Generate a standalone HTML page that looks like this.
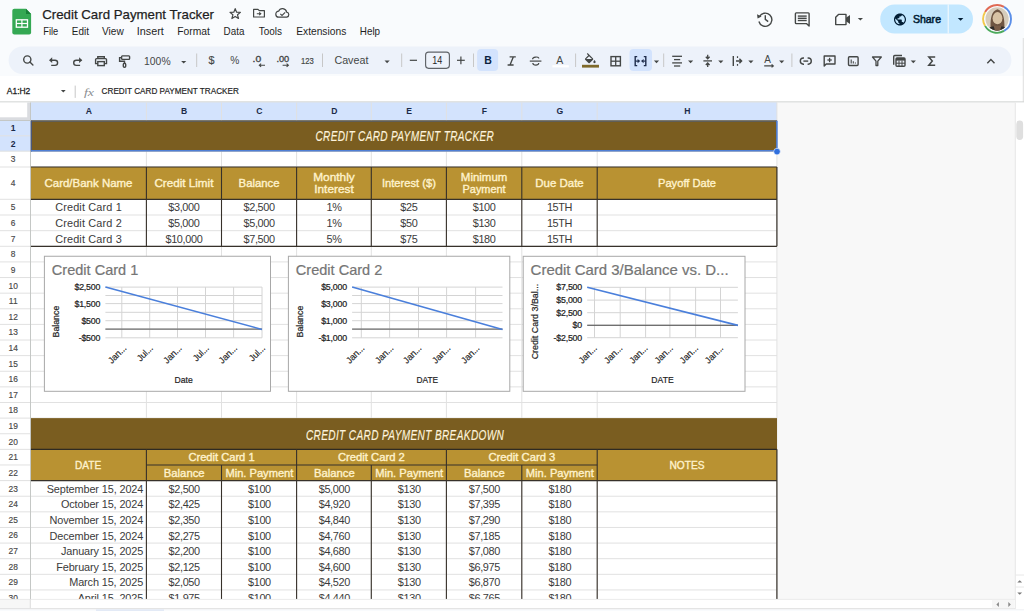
<!DOCTYPE html>
<html><head><meta charset="utf-8"><title>Credit Card Payment Tracker</title>
<style>
html,body{margin:0;padding:0;width:1024px;height:611px;overflow:hidden;background:#f9fbfd}
svg{display:block;font-family:"Liberation Sans", sans-serif}
</style></head><body>
<svg width="1024" height="611" viewBox="0 0 1024 611">
<rect x="0" y="0" width="1024" height="76" fill="#f9fbfd" />
<rect x="0" y="76" width="1024" height="26" fill="#ffffff" />
<path d="M14.3 8.8 H26 L31.1 13.9 V32.6 a2 2 0 0 1 -2 2 H14.3 a2 2 0 0 1 -2 -2 V10.8 a2 2 0 0 1 2 -2 Z" fill="#34a853"/>
<path d="M26 8.8 V13.9 H31.1 Z" fill="#188038"/>
<rect x="16.3" y="19.8" width="11.2" height="7.4" fill="none" stroke="#fff" stroke-width="1.3"/>
<line x1="16.3" y1="23.5" x2="27.5" y2="23.5" stroke="#fff" stroke-width="1.2" />
<line x1="21.9" y1="19.8" x2="21.9" y2="27.2" stroke="#fff" stroke-width="1.2" />
<text x="42.2" y="18.8" font-size="13.6" fill="#1f1f1f" textLength="171.8" lengthAdjust="spacingAndGlyphs" stroke="#1f1f1f" stroke-width="0.25">Credit Card Payment Tracker</text>
<path d="M235.2 8.6 L236.6 12.2 L240.4 12.4 L237.5 14.8 L238.5 18.5 L235.2 16.4 L231.9 18.5 L232.9 14.8 L230 12.4 L233.8 12.2 Z" fill="none" stroke="#444746" stroke-width="1.2" stroke-linejoin="round"/>
<path d="M253.6 9.4 H258 L259.3 10.7 H264.4 V17 H253.6 Z" fill="none" stroke="#444746" stroke-width="1.2" stroke-linejoin="round"/>
<path d="M256.8 13.7 H260.6 M259.2 12.3 L260.8 13.7 L259.2 15.1" fill="none" stroke="#444746" stroke-width="1.1"/>
<path d="M279 17.2 a3 3 0 0 1 -0.4 -6 a4.2 4.2 0 0 1 8 0.9 a2.6 2.6 0 0 1 0.2 5.1 Z" fill="none" stroke="#444746" stroke-width="1.2" stroke-linejoin="round"/>
<path d="M280.3 13.9 L282 15.4 L285.2 12.3" fill="none" stroke="#444746" stroke-width="1.1"/>
<text x="43.3" y="34.5" font-size="11.2" fill="#1f1f1f" textLength="15.0" lengthAdjust="spacingAndGlyphs">File</text>
<text x="71.80000000000001" y="34.5" font-size="11.2" fill="#1f1f1f" textLength="17.1" lengthAdjust="spacingAndGlyphs">Edit</text>
<text x="102.0" y="34.5" font-size="11.2" fill="#1f1f1f" textLength="21.7" lengthAdjust="spacingAndGlyphs">View</text>
<text x="136.8" y="34.5" font-size="11.2" fill="#1f1f1f" textLength="27.0" lengthAdjust="spacingAndGlyphs">Insert</text>
<text x="177.20000000000002" y="34.5" font-size="11.2" fill="#1f1f1f" textLength="32.6" lengthAdjust="spacingAndGlyphs">Format</text>
<text x="223.6" y="34.5" font-size="11.2" fill="#1f1f1f" textLength="20.8" lengthAdjust="spacingAndGlyphs">Data</text>
<text x="258.7" y="34.5" font-size="11.2" fill="#1f1f1f" textLength="23.3" lengthAdjust="spacingAndGlyphs">Tools</text>
<text x="296.2" y="34.5" font-size="11.2" fill="#1f1f1f" textLength="50.1" lengthAdjust="spacingAndGlyphs">Extensions</text>
<text x="359.79999999999995" y="34.5" font-size="11.2" fill="#1f1f1f" textLength="20.3" lengthAdjust="spacingAndGlyphs">Help</text>
<path d="M759.5 16.5 A6.6 6.6 0 1 1 758.9 21.5" fill="none" stroke="#444746" stroke-width="1.4"/>
<path d="M757 14.2 L757.6 18.6 L761.6 16.6 Z" fill="#444746"/>
<path d="M765.3 15.3 V19.4 L768.2 21.6" fill="none" stroke="#444746" stroke-width="1.4"/>
<path d="M796.2 12.9 H808.3 a0.8 0.8 0 0 1 0.8 0.8 V26.1 L806.4 23.6 H796.2 a0.8 0.8 0 0 1 -0.8 -0.8 V13.7 a0.8 0.8 0 0 1 0.8 -0.8 Z" fill="none" stroke="#444746" stroke-width="1.4" stroke-linejoin="round"/>
<line x1="797.8" y1="16.1" x2="806.7" y2="16.1" stroke="#444746" stroke-width="1.4" />
<line x1="797.8" y1="18.3" x2="806.7" y2="18.3" stroke="#444746" stroke-width="1.4" />
<line x1="797.8" y1="20.5" x2="806.7" y2="20.5" stroke="#444746" stroke-width="1.4" />
<path d="M838.5 14.4 H846 V24.6 H835.7 V17.2 Z" fill="none" stroke="#444746" stroke-width="1.4" stroke-linejoin="round"/>
<path d="M846 17.8 L850 15 V24 L846 21.2 Z" fill="#444746"/>
<path d="M857.8 18 H863 L860.4 20.6 Z" fill="#444746"/>
<rect x="880.2" y="4.5" width="92.8" height="28.9" rx="14.45" fill="#c2e7ff"/>
<line x1="948.2" y1="4.5" x2="948.2" y2="33.4" stroke="#f9fbfd" stroke-width="1" />
<path transform="translate(892.8,12.35) scale(0.6)" fill="#001d35" d="M12 2C6.48 2 2 6.48 2 12s4.48 10 10 10 10-4.48 10-10S17.52 2 12 2zm-1 17.93c-3.95-.49-7-3.85-7-7.93 0-.62.08-1.21.21-1.79L9 15v1c0 1.1.9 2 2 2v1.930zm6.9-2.54c-.26-.81-1-1.390-1.900-1.390h-1v-3c0-.55-.45-1-1-1H8v-2h2c.55 0 1-.45 1-1V7h2c1.1 0 2-.9 2-2v-.41c2.93 1.19 5 4.06 5 7.41 0 2.08-.8 3.97-2.1 5.39z"/>
<text x="912.9" y="22.9" font-size="11.2" fill="#001d35" textLength="28.1" lengthAdjust="spacingAndGlyphs" stroke="#001d35" stroke-width="0.55">Share</text>
<path d="M957.8 18 H963.4 L960.6 20.8 Z" fill="#001d35"/>
<path d="M985.06 11.95 A13.9 13.9 0 0 1 1004.05 6.86" fill="none" stroke="#e06a55" stroke-width="1.9"/>
<path d="M1004.05 6.86 A13.9 13.9 0 0 1 1004.05 30.94" fill="none" stroke="#5a8ee8" stroke-width="1.9"/>
<path d="M1004.05 30.94 A13.9 13.9 0 0 1 985.06 25.85" fill="none" stroke="#4caa5c" stroke-width="1.9"/>
<path d="M985.06 25.85 A13.9 13.9 0 0 1 985.06 11.95" fill="none" stroke="#f2c94c" stroke-width="1.9"/>
<clipPath id="avc"><circle cx="997.1" cy="18.9" r="11.6"/></clipPath>
<g clip-path="url(#avc)">
<rect x="980" y="2" width="36" height="34" fill="#d6ccbb"/>
<path d="M990.6 32 C990.4 22 990 11.5 997.5 9.3 C1004.8 11.5 1004.6 22 1004.4 32 Z" fill="#6f5542"/>
<ellipse cx="997.5" cy="18.2" rx="4.9" ry="6.1" fill="#d8c2a4"/>
<path d="M986 33 C987 28.5 990 26.5 993.5 26.2 L1001.5 26.2 C1005 26.5 1008 28.5 1009 33 Z" fill="#2f2c2a"/>
<path d="M993.6 26 C994.6 29 995 31 995 33 L1000 33 C1000 31 1000.4 29 1001.4 26 Z" fill="#7a5d48"/>
</g>
<rect x="8.6" y="46.6" width="1002.8" height="27.4" rx="13.7" fill="#edf2fa"/>
<circle cx="27.3" cy="59.5" r="3.6" fill="none" stroke="#444746" stroke-width="1.4"/>
<path d="M29.9 62.1 L32.9 65" fill="none" stroke="#444746" stroke-width="1.4" stroke-linecap="round"/>
<path d="M50 60.2 H55 A2.6 2.6 0 0 1 55 65.4 H51.2" fill="none" stroke="#444746" stroke-width="1.4"/>
<path d="M52.2 57.3 L49 60.2 L52.2 63.1 Z" fill="#444746"/>
<path d="M81.3 60.2 H76.3 A2.6 2.6 0 0 0 76.3 65.4 H80.1" fill="none" stroke="#444746" stroke-width="1.4"/>
<path d="M79.1 57.3 L82.3 60.2 L79.1 63.1 Z" fill="#444746"/>
<path d="M97.8 58.6 V56.7 H104.3 V58.6" fill="none" stroke="#444746" stroke-width="1.4"/>
<path d="M97.8 63.6 H95.6 V59.6 a1 1 0 0 1 1 -1 H105.5 a1 1 0 0 1 1 1 V63.6 H104.3" fill="none" stroke="#444746" stroke-width="1.4"/>
<rect x="97.8" y="61.6" width="6.5" height="4" fill="none" stroke="#444746" stroke-width="1.4"/>
<rect x="121.6" y="55.9" width="8" height="3.5" rx="0.8" fill="none" stroke="#444746" stroke-width="1.4"/>
<path d="M121.6 57.6 H119.6 V61.3 H124.5 V63.3" fill="none" stroke="#444746" stroke-width="1.4"/>
<rect x="123.3" y="63.3" width="2.4" height="4" rx="1.1" fill="none" stroke="#444746" stroke-width="1.4"/>
<text x="144.1" y="64.8" font-size="11" fill="#444746" textLength="26.5" lengthAdjust="spacingAndGlyphs">100%</text>
<path d="M181.1 61 H186.3 L183.7 63.6 Z" fill="#444746"/>
<line x1="196.7" y1="53.5" x2="196.7" y2="67" stroke="#c7c7c7" stroke-width="1" />
<text x="211.5" y="64.4" font-size="10.8" fill="#444746" text-anchor="middle" stroke="#444746" stroke-width="0.15">$</text>
<text x="234.9" y="64.3" font-size="10.2" fill="#444746" text-anchor="middle">%</text>
<text x="252.6" y="62.4" font-size="9.2" fill="#444746" textLength="8.6" lengthAdjust="spacingAndGlyphs" stroke="#444746" stroke-width="0.35">.0</text>
<path d="M265 65.2 H259.3 M261.1 63.6 L259.3 65.2 L261.1 66.8" fill="none" stroke="#444746" stroke-width="1.1"/>
<text x="276.4" y="62.4" font-size="9.2" fill="#444746" textLength="12.8" lengthAdjust="spacingAndGlyphs" stroke="#444746" stroke-width="0.35">.00</text>
<path d="M282.6 65.2 H288.4 M286.6 63.6 L288.4 65.2 L286.6 66.8" fill="none" stroke="#444746" stroke-width="1.1"/>
<text x="301.1" y="64.3" font-size="9.6" fill="#444746" textLength="12.8" lengthAdjust="spacingAndGlyphs" stroke="#444746" stroke-width="0.2">123</text>
<line x1="322.5" y1="53.5" x2="322.5" y2="67" stroke="#c7c7c7" stroke-width="1" />
<text x="334.4" y="63.8" font-size="11.2" fill="#444746" textLength="34" lengthAdjust="spacingAndGlyphs">Caveat</text>
<path d="M384.5 60.6 H389.7 L387.1 63.2 Z" fill="#444746"/>
<line x1="401.7" y1="53.5" x2="401.7" y2="67" stroke="#c7c7c7" stroke-width="1" />
<line x1="409.8" y1="60.3" x2="417" y2="60.3" stroke="#444746" stroke-width="1.2" />
<rect x="425.6" y="52.1" width="23.8" height="16.2" rx="3" fill="none" stroke="#5f6368" stroke-width="1.15"/>
<text x="437.3" y="64.2" font-size="10.5" fill="#1f1f1f" text-anchor="middle" textLength="10" lengthAdjust="spacingAndGlyphs">14</text>
<line x1="457" y1="60.3" x2="464.8" y2="60.3" stroke="#444746" stroke-width="1.2" />
<line x1="460.9" y1="56.4" x2="460.9" y2="64.2" stroke="#444746" stroke-width="1.2" />
<line x1="473.5" y1="53.5" x2="473.5" y2="67" stroke="#c7c7c7" stroke-width="1" />
<rect x="477.1" y="49.1" width="21" height="21.9" rx="4" fill="#d3e3fd"/>
<text x="488.1" y="64.2" font-size="10.5" fill="#0b1f3f" text-anchor="middle" font-weight="bold">B</text>
<path d="M509.6 56.8 H515.8 M507.6 65 H513.6 M513.4 56.8 L510 65" fill="none" stroke="#444746" stroke-width="1.35"/>
<line x1="529.8" y1="61.1" x2="541.4" y2="61.1" stroke="#444746" stroke-width="1.2" />
<path d="M532.6 59.3 C532.4 56.6 538.8 56.2 538.8 58.6 M532.8 63 C533 65.8 539 65.8 538.7 63" fill="none" stroke="#444746" stroke-width="1.2"/>
<text x="559.8" y="64" font-size="10.5" fill="#444746" text-anchor="middle">A</text>
<rect x="552.4" y="65.2" width="16.4" height="2.2" fill="#ffffff" />
<line x1="575.6" y1="53.5" x2="575.6" y2="67" stroke="#c7c7c7" stroke-width="1" />
<path transform="translate(583.1,53.1) scale(0.6)" fill="#444746" d="M16.56 8.94L7.62 0 6.21 1.41l2.38 2.38-5.15 5.15c-.59.59-.59 1.540 0 2.120l5.5 5.5c.29.29.68.44 1.06.44s.77-.15 1.06-.44l5.5-5.5c.59-.58.59-1.530 0-2.120zM5.21 10L10 5.210 14.79 10H5.210zM19 11.5s-2 2.17-2 3.5c0 1.1.9 2 2 2s2-.9 2-2c0-1.33-2-3.5-2-3.5z"/>
<rect x="582" y="64.8" width="17" height="2.8" fill="#7f6a2a" />
<rect x="611" y="56.6" width="9.4" height="9.2" fill="none" stroke="#444746" stroke-width="1.4"/>
<line x1="615.7" y1="56.6" x2="615.7" y2="65.8" stroke="#444746" stroke-width="1.3" />
<line x1="611" y1="61.2" x2="620.4" y2="61.2" stroke="#444746" stroke-width="1.3" />
<rect x="629.5" y="49" width="22.5" height="22" rx="4" fill="#d3e3fd"/>
<path d="M637.2 56.6 H635.2 V65.6 H637.2 M643.8 56.6 H645.8 V65.6 H643.8" fill="none" stroke="#1f2d4d" stroke-width="1.4"/>
<path d="M640.2 61.1 L637.6 58.9 V63.3 Z M641 61.1 L643.6 58.9 V63.3 Z" fill="#1f2d4d"/>
<line x1="635.2" y1="61.1" x2="638" y2="61.1" stroke="#1f2d4d" stroke-width="1.2" />
<line x1="643.2" y1="61.1" x2="645.8" y2="61.1" stroke="#1f2d4d" stroke-width="1.2" />
<path d="M653.9 60.6 H659.1 L656.5 63.2 Z" fill="#444746"/>
<line x1="663.7" y1="53.5" x2="663.7" y2="67" stroke="#c7c7c7" stroke-width="1" />
<line x1="672.2" y1="56.3" x2="682" y2="56.3" stroke="#444746" stroke-width="1.3" />
<line x1="674" y1="59.6" x2="680.2" y2="59.6" stroke="#444746" stroke-width="1.3" />
<line x1="672.2" y1="62.9" x2="682" y2="62.9" stroke="#444746" stroke-width="1.3" />
<line x1="674" y1="66" x2="680.2" y2="66" stroke="#444746" stroke-width="1.3" />
<path d="M688 60.6 H693.2 L690.6 63.2 Z" fill="#444746"/>
<line x1="703.4" y1="60.9" x2="712" y2="60.9" stroke="#444746" stroke-width="1.3" />
<path d="M707.7 54.8 V58.6 M705.8 56.8 L707.7 58.8 L709.6 56.8 M707.7 67 V63.2 M705.8 65 L707.7 63 L709.6 65" fill="none" stroke="#444746" stroke-width="1.3"/>
<path d="M718.2 60.6 H723.4 L720.8 63.2 Z" fill="#444746"/>
<line x1="733.3" y1="56" x2="733.3" y2="66" stroke="#444746" stroke-width="1.4" />
<path d="M736 61 H741.5 M739.4 58.8 L741.6 61 L739.4 63.2" fill="none" stroke="#444746" stroke-width="1.4"/>
<line x1="737.5" y1="56.2" x2="737.5" y2="58" stroke="#444746" stroke-width="1.2" />
<line x1="737.5" y1="64" x2="737.5" y2="65.8" stroke="#444746" stroke-width="1.2" />
<path d="M748.3 60.6 H753.5 L750.9 63.2 Z" fill="#444746"/>
<text x="767.6" y="63.2" font-size="10" fill="#444746" text-anchor="middle">A</text>
<path d="M764.2 65.9 H773.2 M771.6 64.4 L773.3 65.9 L771.6 67.4" fill="none" stroke="#444746" stroke-width="1.2"/>
<path d="M779.1 60.6 H784.3 L781.7 63.2 Z" fill="#444746"/>
<line x1="791.9" y1="53.5" x2="791.9" y2="67" stroke="#c7c7c7" stroke-width="1" />
<rect x="800.3" y="58" width="11" height="6.2" rx="3.1" fill="none" stroke="#444746" stroke-width="1.4"/>
<rect x="804" y="57" width="3.6" height="8.3" fill="#edf2fa" />
<line x1="803.4" y1="61.1" x2="808.2" y2="61.1" stroke="#444746" stroke-width="1.4" />
<path d="M824.2 56 H835 V64 H826.2 L824.2 66 Z" fill="none" stroke="#444746" stroke-width="1.4" stroke-linejoin="round"/>
<line x1="829.6" y1="57.8" x2="829.6" y2="62.2" stroke="#444746" stroke-width="1.3" />
<line x1="827.4" y1="60" x2="831.8" y2="60" stroke="#444746" stroke-width="1.3" />
<rect x="848.5" y="56.7" width="9.6" height="8.8" rx="1" fill="none" stroke="#444746" stroke-width="1.4"/>
<line x1="851.2" y1="59.5" x2="851.2" y2="63.6" stroke="#444746" stroke-width="1.1" />
<line x1="853.3" y1="61.2" x2="853.3" y2="63.6" stroke="#444746" stroke-width="1.1" />
<line x1="855.4" y1="62.6" x2="855.4" y2="63.6" stroke="#444746" stroke-width="1.1" />
<path d="M872.5 57 H881.3 L877.8 61.2 V65.5 H876 V61.2 Z" fill="none" stroke="#444746" stroke-width="1.3" stroke-linejoin="round"/>
<path d="M893.7 64.8 V56.5 a1 1 0 0 1 1 -1 H902" fill="none" stroke="#444746" stroke-width="1.4"/>
<rect x="896" y="58" width="9" height="8.3" rx="1" fill="none" stroke="#444746" stroke-width="1.4"/>
<rect x="896" y="58" width="9" height="2.6" fill="#444746" />
<line x1="896" y1="63.2" x2="905" y2="63.2" stroke="#444746" stroke-width="1" />
<line x1="899" y1="60.6" x2="899" y2="66.3" stroke="#444746" stroke-width="1" />
<line x1="902" y1="60.6" x2="902" y2="66.3" stroke="#444746" stroke-width="1" />
<path d="M910.7 60.6 H915.9 L913.3 63.2 Z" fill="#444746"/>
<path d="M935.2 57 H928.8 L932.3 61.1 L928.8 65.2 H935.2" fill="none" stroke="#444746" stroke-width="1.5"/>
<path d="M987.3 63.2 L990.9 59.4 L994.5 63.2" fill="none" stroke="#444746" stroke-width="1.4"/>
<text x="6.8" y="94.4" font-size="9.8" fill="#1f1f1f" textLength="23.5" lengthAdjust="spacingAndGlyphs" stroke="#1f1f1f" stroke-width="0.3">A1:H2</text>
<path d="M60.9 90.1 H65.7 L63.3 92.5 Z" fill="#444746"/>
<line x1="75.2" y1="85.6" x2="75.2" y2="97.9" stroke="#c7c7c7" stroke-width="1" />
<text x="84" y="95.8" font-size="11" fill="#8a8d91" font-style="italic" textLength="10" lengthAdjust="spacingAndGlyphs" font-family="Liberation Serif">fx</text>
<text x="101.6" y="94" font-size="9.6" fill="#1f1f1f" textLength="137.3" lengthAdjust="spacingAndGlyphs" stroke="#1f1f1f" stroke-width="0.2">CREDIT CARD PAYMENT TRACKER</text>
<rect x="0" y="101.5" width="1024" height="1.0" fill="#c4c7c5" />
<rect x="777" y="102.5" width="238" height="496.5" fill="#f8f8f8" />
<rect x="30.5" y="120.5" width="746.5" height="478.5" fill="#ffffff" />
<rect x="30.5" y="102.5" width="746.5" height="18.0" fill="#d3e3fd" />
<rect x="0" y="102.5" width="30.5" height="18.0" fill="#ffffff" />
<rect x="27.2" y="102.5" width="3.3" height="18.0" fill="#dadce0" />
<rect x="0" y="117.3" width="30.5" height="3.2" fill="#dadce0" />
<rect x="0" y="120.5" width="30.5" height="478.5" fill="#ffffff" />
<rect x="0" y="120.5" width="30.5" height="30.7" fill="#d3e3fd" />
<line x1="0" y1="120.5" x2="777" y2="120.5" stroke="#e1e1e1" stroke-width="1" />
<line x1="0" y1="135.8" x2="777" y2="135.8" stroke="#e1e1e1" stroke-width="1" />
<line x1="0" y1="151.2" x2="777" y2="151.2" stroke="#e1e1e1" stroke-width="1" />
<line x1="0" y1="167.0" x2="777" y2="167.0" stroke="#e1e1e1" stroke-width="1" />
<line x1="0" y1="199.3" x2="777" y2="199.3" stroke="#e1e1e1" stroke-width="1" />
<line x1="0" y1="215.0" x2="777" y2="215.0" stroke="#e1e1e1" stroke-width="1" />
<line x1="0" y1="230.7" x2="777" y2="230.7" stroke="#e1e1e1" stroke-width="1" />
<line x1="0" y1="246.3" x2="777" y2="246.3" stroke="#e1e1e1" stroke-width="1" />
<line x1="0" y1="261.92" x2="777" y2="261.92" stroke="#e1e1e1" stroke-width="1" />
<line x1="0" y1="277.54" x2="777" y2="277.54" stroke="#e1e1e1" stroke-width="1" />
<line x1="0" y1="293.16" x2="777" y2="293.16" stroke="#e1e1e1" stroke-width="1" />
<line x1="0" y1="308.78" x2="777" y2="308.78" stroke="#e1e1e1" stroke-width="1" />
<line x1="0" y1="324.4" x2="777" y2="324.4" stroke="#e1e1e1" stroke-width="1" />
<line x1="0" y1="340.02" x2="777" y2="340.02" stroke="#e1e1e1" stroke-width="1" />
<line x1="0" y1="355.64" x2="777" y2="355.64" stroke="#e1e1e1" stroke-width="1" />
<line x1="0" y1="371.26" x2="777" y2="371.26" stroke="#e1e1e1" stroke-width="1" />
<line x1="0" y1="386.88" x2="777" y2="386.88" stroke="#e1e1e1" stroke-width="1" />
<line x1="0" y1="402.5" x2="777" y2="402.5" stroke="#e1e1e1" stroke-width="1" />
<line x1="0" y1="418.12" x2="777" y2="418.12" stroke="#e1e1e1" stroke-width="1" />
<line x1="0" y1="433.74" x2="777" y2="433.74" stroke="#e1e1e1" stroke-width="1" />
<line x1="0" y1="449.36" x2="777" y2="449.36" stroke="#e1e1e1" stroke-width="1" />
<line x1="0" y1="464.98" x2="777" y2="464.98" stroke="#e1e1e1" stroke-width="1" />
<line x1="0" y1="480.6" x2="777" y2="480.6" stroke="#e1e1e1" stroke-width="1" />
<line x1="0" y1="496.22" x2="777" y2="496.22" stroke="#e1e1e1" stroke-width="1" />
<line x1="0" y1="511.84" x2="777" y2="511.84" stroke="#e1e1e1" stroke-width="1" />
<line x1="0" y1="527.46" x2="777" y2="527.46" stroke="#e1e1e1" stroke-width="1" />
<line x1="0" y1="543.08" x2="777" y2="543.08" stroke="#e1e1e1" stroke-width="1" />
<line x1="0" y1="558.7" x2="777" y2="558.7" stroke="#e1e1e1" stroke-width="1" />
<line x1="0" y1="574.32" x2="777" y2="574.32" stroke="#e1e1e1" stroke-width="1" />
<line x1="0" y1="589.94" x2="777" y2="589.94" stroke="#e1e1e1" stroke-width="1" />
<line x1="0" y1="120.5" x2="777" y2="120.5" stroke="#c4c7c5" stroke-width="1" />
<line x1="146.4" y1="102.5" x2="146.4" y2="599" stroke="#e1e1e1" stroke-width="1" />
<line x1="221.5" y1="102.5" x2="221.5" y2="599" stroke="#e1e1e1" stroke-width="1" />
<line x1="296.6" y1="102.5" x2="296.6" y2="599" stroke="#e1e1e1" stroke-width="1" />
<line x1="371.3" y1="102.5" x2="371.3" y2="599" stroke="#e1e1e1" stroke-width="1" />
<line x1="446.4" y1="102.5" x2="446.4" y2="599" stroke="#e1e1e1" stroke-width="1" />
<line x1="521.8" y1="102.5" x2="521.8" y2="599" stroke="#e1e1e1" stroke-width="1" />
<line x1="597.2" y1="102.5" x2="597.2" y2="599" stroke="#e1e1e1" stroke-width="1" />
<line x1="776.9" y1="102.5" x2="776.9" y2="599" stroke="#e1e1e1" stroke-width="1" />
<line x1="30.5" y1="102.5" x2="30.5" y2="599" stroke="#c4c7c5" stroke-width="1" />
<text x="88.8" y="114" font-size="8.6" fill="#1b2a48" text-anchor="middle" font-weight="bold">A</text>
<text x="184.2" y="114" font-size="8.6" fill="#1b2a48" text-anchor="middle" font-weight="bold">B</text>
<text x="259.4" y="114" font-size="8.6" fill="#1b2a48" text-anchor="middle" font-weight="bold">C</text>
<text x="334.3" y="114" font-size="8.6" fill="#1b2a48" text-anchor="middle" font-weight="bold">D</text>
<text x="409.2" y="114" font-size="8.6" fill="#1b2a48" text-anchor="middle" font-weight="bold">E</text>
<text x="484.4" y="114" font-size="8.6" fill="#1b2a48" text-anchor="middle" font-weight="bold">F</text>
<text x="559.8" y="114" font-size="8.6" fill="#1b2a48" text-anchor="middle" font-weight="bold">G</text>
<text x="687.3" y="114" font-size="8.6" fill="#1b2a48" text-anchor="middle" font-weight="bold">H</text>
<text x="13.2" y="131.1" font-size="8.6" fill="#1b2a48" text-anchor="middle" font-weight="bold">1</text>
<text x="13.2" y="146.6" font-size="8.6" fill="#1b2a48" text-anchor="middle" font-weight="bold">2</text>
<text x="13.2" y="162.2" font-size="8.4" fill="#474747" text-anchor="middle" stroke="#474747" stroke-width="0.15">3</text>
<text x="13.2" y="186.2" font-size="8.4" fill="#474747" text-anchor="middle" stroke="#474747" stroke-width="0.15">4</text>
<text x="13.2" y="210.2" font-size="8.4" fill="#474747" text-anchor="middle" stroke="#474747" stroke-width="0.15">5</text>
<text x="13.2" y="225.9" font-size="8.4" fill="#474747" text-anchor="middle" stroke="#474747" stroke-width="0.15">6</text>
<text x="13.2" y="241.6" font-size="8.4" fill="#474747" text-anchor="middle" stroke="#474747" stroke-width="0.15">7</text>
<text x="13.2" y="257.2" font-size="8.4" fill="#474747" text-anchor="middle" stroke="#474747" stroke-width="0.15">8</text>
<text x="13.2" y="272.8" font-size="8.4" fill="#474747" text-anchor="middle" stroke="#474747" stroke-width="0.15">9</text>
<text x="13.2" y="288.5" font-size="8.4" fill="#474747" text-anchor="middle" stroke="#474747" stroke-width="0.15">10</text>
<text x="13.2" y="304.1" font-size="8.4" fill="#474747" text-anchor="middle" stroke="#474747" stroke-width="0.15">11</text>
<text x="13.2" y="319.7" font-size="8.4" fill="#474747" text-anchor="middle" stroke="#474747" stroke-width="0.15">12</text>
<text x="13.2" y="335.3" font-size="8.4" fill="#474747" text-anchor="middle" stroke="#474747" stroke-width="0.15">13</text>
<text x="13.2" y="350.9" font-size="8.4" fill="#474747" text-anchor="middle" stroke="#474747" stroke-width="0.15">14</text>
<text x="13.2" y="366.6" font-size="8.4" fill="#474747" text-anchor="middle" stroke="#474747" stroke-width="0.15">15</text>
<text x="13.2" y="382.2" font-size="8.4" fill="#474747" text-anchor="middle" stroke="#474747" stroke-width="0.15">16</text>
<text x="13.2" y="397.8" font-size="8.4" fill="#474747" text-anchor="middle" stroke="#474747" stroke-width="0.15">17</text>
<text x="13.2" y="413.4" font-size="8.4" fill="#474747" text-anchor="middle" stroke="#474747" stroke-width="0.15">18</text>
<text x="13.2" y="429.0" font-size="8.4" fill="#474747" text-anchor="middle" stroke="#474747" stroke-width="0.15">19</text>
<text x="13.2" y="444.7" font-size="8.4" fill="#474747" text-anchor="middle" stroke="#474747" stroke-width="0.15">20</text>
<text x="13.2" y="460.3" font-size="8.4" fill="#474747" text-anchor="middle" stroke="#474747" stroke-width="0.15">21</text>
<text x="13.2" y="475.9" font-size="8.4" fill="#474747" text-anchor="middle" stroke="#474747" stroke-width="0.15">22</text>
<text x="13.2" y="491.5" font-size="8.4" fill="#474747" text-anchor="middle" stroke="#474747" stroke-width="0.15">23</text>
<text x="13.2" y="507.1" font-size="8.4" fill="#474747" text-anchor="middle" stroke="#474747" stroke-width="0.15">24</text>
<text x="13.2" y="522.8" font-size="8.4" fill="#474747" text-anchor="middle" stroke="#474747" stroke-width="0.15">25</text>
<text x="13.2" y="538.4" font-size="8.4" fill="#474747" text-anchor="middle" stroke="#474747" stroke-width="0.15">26</text>
<text x="13.2" y="554.0" font-size="8.4" fill="#474747" text-anchor="middle" stroke="#474747" stroke-width="0.15">27</text>
<text x="13.2" y="569.6" font-size="8.4" fill="#474747" text-anchor="middle" stroke="#474747" stroke-width="0.15">28</text>
<text x="13.2" y="585.2" font-size="8.4" fill="#474747" text-anchor="middle" stroke="#474747" stroke-width="0.15">29</text>
<text x="13.2" y="600.9" font-size="8.4" fill="#474747" text-anchor="middle" stroke="#474747" stroke-width="0.15">30</text>
<rect x="31" y="120.5" width="746" height="30.7" fill="#7a5d20" />
<text x="0" y="0" font-size="12.6" fill="#fdf3dc" stroke="#fdf3dc" stroke-width="0.15" font-style="italic" text-anchor="middle" textLength="223" lengthAdjust="spacing" transform="translate(404.6,141.3) scale(0.8,1.22)">CREDIT CARD PAYMENT TRACKER</text>
<rect x="31" y="167.0" width="746" height="32.3" fill="#b99232" />
<line x1="30.9" y1="167.0" x2="776.9" y2="167.0" stroke="#37312a" stroke-width="1.2" />
<line x1="30.9" y1="246.3" x2="776.9" y2="246.3" stroke="#37312a" stroke-width="1.3" />
<line x1="776.9" y1="167.0" x2="776.9" y2="246.3" stroke="#37312a" stroke-width="1.2" />
<line x1="30.9" y1="199.3" x2="776.9" y2="199.3" stroke="#37312a" stroke-width="1.2" />
<line x1="146.4" y1="167.0" x2="146.4" y2="246.3" stroke="#37312a" stroke-width="1.1" />
<line x1="221.5" y1="167.0" x2="221.5" y2="246.3" stroke="#37312a" stroke-width="1.1" />
<line x1="296.6" y1="167.0" x2="296.6" y2="246.3" stroke="#37312a" stroke-width="1.1" />
<line x1="371.3" y1="167.0" x2="371.3" y2="246.3" stroke="#37312a" stroke-width="1.1" />
<line x1="446.4" y1="167.0" x2="446.4" y2="246.3" stroke="#37312a" stroke-width="1.1" />
<line x1="521.8" y1="167.0" x2="521.8" y2="246.3" stroke="#37312a" stroke-width="1.1" />
<line x1="597.2" y1="167.0" x2="597.2" y2="246.3" stroke="#37312a" stroke-width="1.1" />
<text x="88.5" y="186.7" font-size="10.6" fill="#fff2cc" text-anchor="middle" textLength="88" lengthAdjust="spacingAndGlyphs" stroke="#fff2cc" stroke-width="0.35">Card/Bank Name</text>
<text x="183.9" y="186.7" font-size="10.6" fill="#fff2cc" text-anchor="middle" textLength="59" lengthAdjust="spacingAndGlyphs" stroke="#fff2cc" stroke-width="0.35">Credit Limit</text>
<text x="259.1" y="186.7" font-size="10.6" fill="#fff2cc" text-anchor="middle" textLength="41" lengthAdjust="spacingAndGlyphs" stroke="#fff2cc" stroke-width="0.35">Balance</text>
<text x="408.9" y="186.7" font-size="10.6" fill="#fff2cc" text-anchor="middle" textLength="54" lengthAdjust="spacingAndGlyphs" stroke="#fff2cc" stroke-width="0.35">Interest ($)</text>
<text x="559.5" y="186.7" font-size="10.6" fill="#fff2cc" text-anchor="middle" textLength="48.5" lengthAdjust="spacingAndGlyphs" stroke="#fff2cc" stroke-width="0.35">Due Date</text>
<text x="687.0" y="186.7" font-size="10.6" fill="#fff2cc" text-anchor="middle" textLength="58" lengthAdjust="spacingAndGlyphs" stroke="#fff2cc" stroke-width="0.35">Payoff Date</text>
<text x="334.0" y="181.0" font-size="10.6" fill="#fff2cc" text-anchor="middle" textLength="41.5" lengthAdjust="spacingAndGlyphs" stroke="#fff2cc" stroke-width="0.35">Monthly</text>
<text x="334.0" y="193.0" font-size="10.6" fill="#fff2cc" text-anchor="middle" textLength="39.5" lengthAdjust="spacingAndGlyphs" stroke="#fff2cc" stroke-width="0.35">Interest</text>
<text x="484.1" y="181.0" font-size="10.6" fill="#fff2cc" text-anchor="middle" textLength="46.5" lengthAdjust="spacingAndGlyphs" stroke="#fff2cc" stroke-width="0.35">Minimum</text>
<text x="484.1" y="193.0" font-size="10.6" fill="#fff2cc" text-anchor="middle" textLength="43" lengthAdjust="spacingAndGlyphs" stroke="#fff2cc" stroke-width="0.35">Payment</text>
<text x="88.5" y="211.1" font-size="10.9" fill="#3b3b3b" text-anchor="middle" letter-spacing="0.15">Credit Card 1</text>
<text x="183.9" y="211.1" font-size="10.9" fill="#3b3b3b" text-anchor="middle" letter-spacing="-0.35">$3,000</text>
<text x="259.1" y="211.1" font-size="10.9" fill="#3b3b3b" text-anchor="middle" letter-spacing="-0.35">$2,500</text>
<text x="334.0" y="211.1" font-size="10.9" fill="#3b3b3b" text-anchor="middle" letter-spacing="-0.35">1%</text>
<text x="408.9" y="211.1" font-size="10.9" fill="#3b3b3b" text-anchor="middle" letter-spacing="-0.35">$25</text>
<text x="484.1" y="211.1" font-size="10.9" fill="#3b3b3b" text-anchor="middle" letter-spacing="-0.35">$100</text>
<text x="559.5" y="211.1" font-size="10.9" fill="#3b3b3b" text-anchor="middle" letter-spacing="-0.35">15TH</text>
<text x="88.5" y="226.8" font-size="10.9" fill="#3b3b3b" text-anchor="middle" letter-spacing="0.15">Credit Card 2</text>
<text x="183.9" y="226.8" font-size="10.9" fill="#3b3b3b" text-anchor="middle" letter-spacing="-0.35">$5,000</text>
<text x="259.1" y="226.8" font-size="10.9" fill="#3b3b3b" text-anchor="middle" letter-spacing="-0.35">$5,000</text>
<text x="334.0" y="226.8" font-size="10.9" fill="#3b3b3b" text-anchor="middle" letter-spacing="-0.35">1%</text>
<text x="408.9" y="226.8" font-size="10.9" fill="#3b3b3b" text-anchor="middle" letter-spacing="-0.35">$50</text>
<text x="484.1" y="226.8" font-size="10.9" fill="#3b3b3b" text-anchor="middle" letter-spacing="-0.35">$130</text>
<text x="559.5" y="226.8" font-size="10.9" fill="#3b3b3b" text-anchor="middle" letter-spacing="-0.35">15TH</text>
<text x="88.5" y="242.5" font-size="10.9" fill="#3b3b3b" text-anchor="middle" letter-spacing="0.15">Credit Card 3</text>
<text x="183.9" y="242.5" font-size="10.9" fill="#3b3b3b" text-anchor="middle" letter-spacing="-0.35">$10,000</text>
<text x="259.1" y="242.5" font-size="10.9" fill="#3b3b3b" text-anchor="middle" letter-spacing="-0.35">$7,500</text>
<text x="334.0" y="242.5" font-size="10.9" fill="#3b3b3b" text-anchor="middle" letter-spacing="-0.35">5%</text>
<text x="408.9" y="242.5" font-size="10.9" fill="#3b3b3b" text-anchor="middle" letter-spacing="-0.35">$75</text>
<text x="484.1" y="242.5" font-size="10.9" fill="#3b3b3b" text-anchor="middle" letter-spacing="-0.35">$180</text>
<text x="559.5" y="242.5" font-size="10.9" fill="#3b3b3b" text-anchor="middle" letter-spacing="-0.35">15TH</text>
<rect x="44.4" y="256.25" width="226.1" height="135.05" fill="#ffffff" stroke="#a8a8a8" stroke-width="1"/>
<text x="51.8" y="274.8" font-size="14.3" fill="#757575" textLength="86.5" lengthAdjust="spacingAndGlyphs" stroke="#757575" stroke-width="0.2">Credit Card 1</text>
<line x1="105.4" y1="287.1" x2="262" y2="287.1" stroke="#d4d4d4" stroke-width="1" />
<line x1="105.4" y1="295.5" x2="262" y2="295.5" stroke="#d4d4d4" stroke-width="1" />
<line x1="105.4" y1="303.6" x2="262" y2="303.6" stroke="#d4d4d4" stroke-width="1" />
<line x1="105.4" y1="312.3" x2="262" y2="312.3" stroke="#d4d4d4" stroke-width="1" />
<line x1="105.4" y1="320.7" x2="262" y2="320.7" stroke="#d4d4d4" stroke-width="1" />
<line x1="105.4" y1="329.1" x2="262" y2="329.1" stroke="#d4d4d4" stroke-width="1" />
<line x1="105.4" y1="337.8" x2="262" y2="337.8" stroke="#d4d4d4" stroke-width="1" />
<line x1="121.8" y1="287.1" x2="121.8" y2="337.8" stroke="#d4d4d4" stroke-width="1" />
<line x1="149.7" y1="287.1" x2="149.7" y2="337.8" stroke="#d4d4d4" stroke-width="1" />
<line x1="177.5" y1="287.1" x2="177.5" y2="337.8" stroke="#d4d4d4" stroke-width="1" />
<line x1="205.5" y1="287.1" x2="205.5" y2="337.8" stroke="#d4d4d4" stroke-width="1" />
<line x1="233.6" y1="287.1" x2="233.6" y2="337.8" stroke="#d4d4d4" stroke-width="1" />
<line x1="262" y1="287.1" x2="262" y2="337.8" stroke="#d4d4d4" stroke-width="1" />
<line x1="105.4" y1="329.1" x2="262" y2="329.1" stroke="#6f6f6f" stroke-width="1.4" />
<text x="100.2" y="290.2" font-size="8.8" fill="#222222" text-anchor="end" letter-spacing="-0.2" stroke="#222222" stroke-width="0.22">$2,500</text>
<text x="100.2" y="306.7" font-size="8.8" fill="#222222" text-anchor="end" letter-spacing="-0.2" stroke="#222222" stroke-width="0.22">$1,500</text>
<text x="100.2" y="323.8" font-size="8.8" fill="#222222" text-anchor="end" letter-spacing="-0.2" stroke="#222222" stroke-width="0.22">$500</text>
<text x="100.2" y="340.9" font-size="8.8" fill="#222222" text-anchor="end" letter-spacing="-0.2" stroke="#222222" stroke-width="0.22">-$500</text>
<line x1="105.4" y1="287.1" x2="262" y2="329.4" stroke="#4a7fdb" stroke-width="1.6"/>
<text x="0" y="0" font-size="9.2" fill="#222222" stroke="#222222" stroke-width="0.15" text-anchor="end" letter-spacing="-0.15" transform="translate(126.9,348.9) rotate(-45)">Jan...</text>
<text x="0" y="0" font-size="9.2" fill="#222222" stroke="#222222" stroke-width="0.15" text-anchor="end" letter-spacing="-0.15" transform="translate(153.5,348.9) rotate(-45)">Jul...</text>
<text x="0" y="0" font-size="9.2" fill="#222222" stroke="#222222" stroke-width="0.15" text-anchor="end" letter-spacing="-0.15" transform="translate(182.3,348.9) rotate(-45)">Jan...</text>
<text x="0" y="0" font-size="9.2" fill="#222222" stroke="#222222" stroke-width="0.15" text-anchor="end" letter-spacing="-0.15" transform="translate(209.5,348.9) rotate(-45)">Jul...</text>
<text x="0" y="0" font-size="9.2" fill="#222222" stroke="#222222" stroke-width="0.15" text-anchor="end" letter-spacing="-0.15" transform="translate(237.6,348.9) rotate(-45)">Jan...</text>
<text x="0" y="0" font-size="9.2" fill="#222222" stroke="#222222" stroke-width="0.15" text-anchor="end" letter-spacing="-0.15" transform="translate(265.7,348.9) rotate(-45)">Jul...</text>
<text x="183.7" y="382.9" font-size="9.3" fill="#222222" text-anchor="middle" textLength="18.2" lengthAdjust="spacingAndGlyphs" stroke="#222222" stroke-width="0.2">Date</text>
<text x="0" y="0" font-size="8.8" fill="#222222" stroke="#222222" stroke-width="0.2" text-anchor="middle" textLength="31.8" lengthAdjust="spacingAndGlyphs" transform="translate(59.3,321.6) rotate(-90)">Balance</text>
<rect x="288.4" y="256.25" width="221.4" height="135.05" fill="#ffffff" stroke="#a8a8a8" stroke-width="1"/>
<text x="295.79999999999995" y="274.8" font-size="14.3" fill="#757575" textLength="86.5" lengthAdjust="spacingAndGlyphs" stroke="#757575" stroke-width="0.2">Credit Card 2</text>
<line x1="352.1" y1="287.1" x2="502.5" y2="287.1" stroke="#d4d4d4" stroke-width="1" />
<line x1="352.1" y1="295.5" x2="502.5" y2="295.5" stroke="#d4d4d4" stroke-width="1" />
<line x1="352.1" y1="303.6" x2="502.5" y2="303.6" stroke="#d4d4d4" stroke-width="1" />
<line x1="352.1" y1="312.3" x2="502.5" y2="312.3" stroke="#d4d4d4" stroke-width="1" />
<line x1="352.1" y1="320.7" x2="502.5" y2="320.7" stroke="#d4d4d4" stroke-width="1" />
<line x1="352.1" y1="329.1" x2="502.5" y2="329.1" stroke="#d4d4d4" stroke-width="1" />
<line x1="352.1" y1="337.8" x2="502.5" y2="337.8" stroke="#d4d4d4" stroke-width="1" />
<line x1="361.3" y1="287.1" x2="361.3" y2="337.8" stroke="#d4d4d4" stroke-width="1" />
<line x1="389.6" y1="287.1" x2="389.6" y2="337.8" stroke="#d4d4d4" stroke-width="1" />
<line x1="418.5" y1="287.1" x2="418.5" y2="337.8" stroke="#d4d4d4" stroke-width="1" />
<line x1="446.6" y1="287.1" x2="446.6" y2="337.8" stroke="#d4d4d4" stroke-width="1" />
<line x1="475.6" y1="287.1" x2="475.6" y2="337.8" stroke="#d4d4d4" stroke-width="1" />
<line x1="352.1" y1="329.1" x2="502.5" y2="329.1" stroke="#6f6f6f" stroke-width="1.4" />
<text x="346.90000000000003" y="290.2" font-size="8.8" fill="#222222" text-anchor="end" letter-spacing="-0.2" stroke="#222222" stroke-width="0.22">$5,000</text>
<text x="346.90000000000003" y="306.7" font-size="8.8" fill="#222222" text-anchor="end" letter-spacing="-0.2" stroke="#222222" stroke-width="0.22">$3,000</text>
<text x="346.90000000000003" y="323.8" font-size="8.8" fill="#222222" text-anchor="end" letter-spacing="-0.2" stroke="#222222" stroke-width="0.22">$1,000</text>
<text x="346.90000000000003" y="340.9" font-size="8.8" fill="#222222" text-anchor="end" letter-spacing="-0.2" stroke="#222222" stroke-width="0.22">-$1,000</text>
<line x1="352.1" y1="287.1" x2="502.5" y2="329.4" stroke="#4a7fdb" stroke-width="1.6"/>
<text x="0" y="0" font-size="9.2" fill="#222222" stroke="#222222" stroke-width="0.15" text-anchor="end" letter-spacing="-0.15" transform="translate(364.9,348.9) rotate(-45)">Jan...</text>
<text x="0" y="0" font-size="9.2" fill="#222222" stroke="#222222" stroke-width="0.15" text-anchor="end" letter-spacing="-0.15" transform="translate(393.9,348.9) rotate(-45)">Jan...</text>
<text x="0" y="0" font-size="9.2" fill="#222222" stroke="#222222" stroke-width="0.15" text-anchor="end" letter-spacing="-0.15" transform="translate(422.0,348.9) rotate(-45)">Jan...</text>
<text x="0" y="0" font-size="9.2" fill="#222222" stroke="#222222" stroke-width="0.15" text-anchor="end" letter-spacing="-0.15" transform="translate(451.0,348.9) rotate(-45)">Jan...</text>
<text x="0" y="0" font-size="9.2" fill="#222222" stroke="#222222" stroke-width="0.15" text-anchor="end" letter-spacing="-0.15" transform="translate(480.0,348.9) rotate(-45)">Jan...</text>
<text x="427.3" y="382.9" font-size="9.3" fill="#222222" text-anchor="middle" textLength="21.7" lengthAdjust="spacingAndGlyphs" stroke="#222222" stroke-width="0.2">DATE</text>
<text x="0" y="0" font-size="8.8" fill="#222222" stroke="#222222" stroke-width="0.2" text-anchor="middle" textLength="31.8" lengthAdjust="spacingAndGlyphs" transform="translate(303.3,321.6) rotate(-90)">Balance</text>
<rect x="523.2" y="256.3" width="221.8" height="135.0" fill="#ffffff" stroke="#a8a8a8" stroke-width="1"/>
<text x="530.6" y="274.8" font-size="14.3" fill="#757575" textLength="198" lengthAdjust="spacingAndGlyphs" stroke="#757575" stroke-width="0.2">Credit Card 3/Balance vs. D...</text>
<line x1="587.2" y1="287.3" x2="737.9" y2="287.3" stroke="#d4d4d4" stroke-width="1" />
<line x1="587.2" y1="300.1" x2="737.9" y2="300.1" stroke="#d4d4d4" stroke-width="1" />
<line x1="587.2" y1="312.7" x2="737.9" y2="312.7" stroke="#d4d4d4" stroke-width="1" />
<line x1="587.2" y1="325.2" x2="737.9" y2="325.2" stroke="#d4d4d4" stroke-width="1" />
<line x1="587.2" y1="337.7" x2="737.9" y2="337.7" stroke="#d4d4d4" stroke-width="1" />
<line x1="594.5" y1="287.3" x2="594.5" y2="337.7" stroke="#d4d4d4" stroke-width="1" />
<line x1="620.2" y1="287.3" x2="620.2" y2="337.7" stroke="#d4d4d4" stroke-width="1" />
<line x1="645.6" y1="287.3" x2="645.6" y2="337.7" stroke="#d4d4d4" stroke-width="1" />
<line x1="669.9" y1="287.3" x2="669.9" y2="337.7" stroke="#d4d4d4" stroke-width="1" />
<line x1="695.6" y1="287.3" x2="695.6" y2="337.7" stroke="#d4d4d4" stroke-width="1" />
<line x1="720.5" y1="287.3" x2="720.5" y2="337.7" stroke="#d4d4d4" stroke-width="1" />
<line x1="587.2" y1="325.2" x2="737.9" y2="325.2" stroke="#4a4a4a" stroke-width="1.1" />
<text x="582.0" y="290.4" font-size="8.8" fill="#222222" text-anchor="end" letter-spacing="-0.2" stroke="#222222" stroke-width="0.22">$7,500</text>
<text x="582.0" y="303.2" font-size="8.8" fill="#222222" text-anchor="end" letter-spacing="-0.2" stroke="#222222" stroke-width="0.22">$5,000</text>
<text x="582.0" y="315.8" font-size="8.8" fill="#222222" text-anchor="end" letter-spacing="-0.2" stroke="#222222" stroke-width="0.22">$2,500</text>
<text x="582.0" y="328.3" font-size="8.8" fill="#222222" text-anchor="end" letter-spacing="-0.2" stroke="#222222" stroke-width="0.22">$0</text>
<text x="582.0" y="340.8" font-size="8.8" fill="#222222" text-anchor="end" letter-spacing="-0.2" stroke="#222222" stroke-width="0.22">-$2,500</text>
<line x1="587.2" y1="287.3" x2="737.9" y2="325.4" stroke="#4a7fdb" stroke-width="1.6"/>
<text x="0" y="0" font-size="9.2" fill="#222222" stroke="#222222" stroke-width="0.15" text-anchor="end" letter-spacing="-0.15" transform="translate(597.4,348.9) rotate(-45)">Jan...</text>
<text x="0" y="0" font-size="9.2" fill="#222222" stroke="#222222" stroke-width="0.15" text-anchor="end" letter-spacing="-0.15" transform="translate(622.9,348.9) rotate(-45)">Jan...</text>
<text x="0" y="0" font-size="9.2" fill="#222222" stroke="#222222" stroke-width="0.15" text-anchor="end" letter-spacing="-0.15" transform="translate(648.2,348.9) rotate(-45)">Jan...</text>
<text x="0" y="0" font-size="9.2" fill="#222222" stroke="#222222" stroke-width="0.15" text-anchor="end" letter-spacing="-0.15" transform="translate(673.4,348.9) rotate(-45)">Jan...</text>
<text x="0" y="0" font-size="9.2" fill="#222222" stroke="#222222" stroke-width="0.15" text-anchor="end" letter-spacing="-0.15" transform="translate(698.6,348.9) rotate(-45)">Jan...</text>
<text x="0" y="0" font-size="9.2" fill="#222222" stroke="#222222" stroke-width="0.15" text-anchor="end" letter-spacing="-0.15" transform="translate(723.8,348.9) rotate(-45)">Jan...</text>
<text x="662.5" y="382.9" font-size="9.3" fill="#222222" text-anchor="middle" textLength="22.3" lengthAdjust="spacingAndGlyphs" stroke="#222222" stroke-width="0.2">DATE</text>
<text x="0" y="0" font-size="8.8" fill="#222222" stroke="#222222" stroke-width="0.2" text-anchor="middle" textLength="75.5" lengthAdjust="spacingAndGlyphs" transform="translate(538.3,321.6) rotate(-90)">Credit Card 3/Bal...</text>
<rect x="31" y="418.12" width="746" height="31.24" fill="#7a5d20" />
<text x="0" y="0" font-size="12.6" fill="#fdf3dc" stroke="#fdf3dc" stroke-width="0.15" font-style="italic" text-anchor="middle" textLength="247.5" lengthAdjust="spacing" transform="translate(404.9,439.7) scale(0.8,1.22)">CREDIT CARD PAYMENT BREAKDOWN</text>
<rect x="31" y="449.36" width="746" height="31.24" fill="#b99232" />
<line x1="776.9" y1="449.36" x2="776.9" y2="599" stroke="#37312a" stroke-width="1.2" />
<line x1="30.9" y1="449.36" x2="776.9" y2="449.36" stroke="#2e2a22" stroke-width="1.4" />
<line x1="146.4" y1="464.98" x2="597.2" y2="464.98" stroke="#37312a" stroke-width="1.1" />
<line x1="30.9" y1="480.6" x2="776.9" y2="480.6" stroke="#37312a" stroke-width="1.2" />
<line x1="146.4" y1="449.36" x2="146.4" y2="599" stroke="#37312a" stroke-width="1.1" />
<line x1="296.6" y1="449.36" x2="296.6" y2="599" stroke="#37312a" stroke-width="1.1" />
<line x1="446.4" y1="449.36" x2="446.4" y2="599" stroke="#37312a" stroke-width="1.1" />
<line x1="597.2" y1="449.36" x2="597.2" y2="599" stroke="#37312a" stroke-width="1.1" />
<line x1="221.5" y1="464.98" x2="221.5" y2="599" stroke="#37312a" stroke-width="1.1" />
<line x1="371.3" y1="464.98" x2="371.3" y2="599" stroke="#37312a" stroke-width="1.1" />
<line x1="521.8" y1="464.98" x2="521.8" y2="599" stroke="#37312a" stroke-width="1.1" />
<text x="88.1" y="468.8" font-size="10.6" fill="#fff2cc" text-anchor="middle" textLength="26.2" lengthAdjust="spacingAndGlyphs" stroke="#fff2cc" stroke-width="0.35">DATE</text>
<text x="687" y="468.8" font-size="10.6" fill="#fff2cc" text-anchor="middle" textLength="35" lengthAdjust="spacingAndGlyphs" stroke="#fff2cc" stroke-width="0.35">NOTES</text>
<text x="221.5" y="461.1" font-size="10.6" fill="#fff2cc" text-anchor="middle" textLength="66.2" lengthAdjust="spacingAndGlyphs" stroke="#fff2cc" stroke-width="0.35">Credit Card 1</text>
<text x="371.4" y="461.1" font-size="10.6" fill="#fff2cc" text-anchor="middle" textLength="66.8" lengthAdjust="spacingAndGlyphs" stroke="#fff2cc" stroke-width="0.35">Credit Card 2</text>
<text x="521.9" y="461.1" font-size="10.6" fill="#fff2cc" text-anchor="middle" textLength="66.8" lengthAdjust="spacingAndGlyphs" stroke="#fff2cc" stroke-width="0.35">Credit Card 3</text>
<text x="184.2" y="476.7" font-size="10.6" fill="#fff2cc" text-anchor="middle" textLength="40.8" lengthAdjust="spacingAndGlyphs" stroke="#fff2cc" stroke-width="0.35">Balance</text>
<text x="259.4" y="476.7" font-size="10.6" fill="#fff2cc" text-anchor="middle" textLength="68" lengthAdjust="spacingAndGlyphs" stroke="#fff2cc" stroke-width="0.35">Min. Payment</text>
<text x="334.3" y="476.7" font-size="10.6" fill="#fff2cc" text-anchor="middle" textLength="40.8" lengthAdjust="spacingAndGlyphs" stroke="#fff2cc" stroke-width="0.35">Balance</text>
<text x="409.2" y="476.7" font-size="10.6" fill="#fff2cc" text-anchor="middle" textLength="68" lengthAdjust="spacingAndGlyphs" stroke="#fff2cc" stroke-width="0.35">Min. Payment</text>
<text x="484.4" y="476.7" font-size="10.6" fill="#fff2cc" text-anchor="middle" textLength="40.8" lengthAdjust="spacingAndGlyphs" stroke="#fff2cc" stroke-width="0.35">Balance</text>
<text x="559.8" y="476.7" font-size="10.6" fill="#fff2cc" text-anchor="middle" textLength="68" lengthAdjust="spacingAndGlyphs" stroke="#fff2cc" stroke-width="0.35">Min. Payment</text>
<clipPath id="gclip"><rect x="0" y="102" width="1015" height="497"/></clipPath>
<g clip-path="url(#gclip)">
<text x="143.2" y="492.7" font-size="10.9" fill="#3b3b3b" text-anchor="end" letter-spacing="-0.12">September 15, 2024</text>
<text x="184.2" y="492.7" font-size="10.9" fill="#3b3b3b" text-anchor="middle" letter-spacing="-0.35">$2,500</text>
<text x="259.4" y="492.7" font-size="10.9" fill="#3b3b3b" text-anchor="middle" letter-spacing="-0.35">$100</text>
<text x="334.3" y="492.7" font-size="10.9" fill="#3b3b3b" text-anchor="middle" letter-spacing="-0.35">$5,000</text>
<text x="409.2" y="492.7" font-size="10.9" fill="#3b3b3b" text-anchor="middle" letter-spacing="-0.35">$130</text>
<text x="484.4" y="492.7" font-size="10.9" fill="#3b3b3b" text-anchor="middle" letter-spacing="-0.35">$7,500</text>
<text x="559.8" y="492.7" font-size="10.9" fill="#3b3b3b" text-anchor="middle" letter-spacing="-0.35">$180</text>
<text x="143.2" y="508.3" font-size="10.9" fill="#3b3b3b" text-anchor="end" letter-spacing="-0.12">October 15, 2024</text>
<text x="184.2" y="508.3" font-size="10.9" fill="#3b3b3b" text-anchor="middle" letter-spacing="-0.35">$2,425</text>
<text x="259.4" y="508.3" font-size="10.9" fill="#3b3b3b" text-anchor="middle" letter-spacing="-0.35">$100</text>
<text x="334.3" y="508.3" font-size="10.9" fill="#3b3b3b" text-anchor="middle" letter-spacing="-0.35">$4,920</text>
<text x="409.2" y="508.3" font-size="10.9" fill="#3b3b3b" text-anchor="middle" letter-spacing="-0.35">$130</text>
<text x="484.4" y="508.3" font-size="10.9" fill="#3b3b3b" text-anchor="middle" letter-spacing="-0.35">$7,395</text>
<text x="559.8" y="508.3" font-size="10.9" fill="#3b3b3b" text-anchor="middle" letter-spacing="-0.35">$180</text>
<text x="143.2" y="523.9" font-size="10.9" fill="#3b3b3b" text-anchor="end" letter-spacing="-0.12">November 15, 2024</text>
<text x="184.2" y="523.9" font-size="10.9" fill="#3b3b3b" text-anchor="middle" letter-spacing="-0.35">$2,350</text>
<text x="259.4" y="523.9" font-size="10.9" fill="#3b3b3b" text-anchor="middle" letter-spacing="-0.35">$100</text>
<text x="334.3" y="523.9" font-size="10.9" fill="#3b3b3b" text-anchor="middle" letter-spacing="-0.35">$4,840</text>
<text x="409.2" y="523.9" font-size="10.9" fill="#3b3b3b" text-anchor="middle" letter-spacing="-0.35">$130</text>
<text x="484.4" y="523.9" font-size="10.9" fill="#3b3b3b" text-anchor="middle" letter-spacing="-0.35">$7,290</text>
<text x="559.8" y="523.9" font-size="10.9" fill="#3b3b3b" text-anchor="middle" letter-spacing="-0.35">$180</text>
<text x="143.2" y="539.6" font-size="10.9" fill="#3b3b3b" text-anchor="end" letter-spacing="-0.12">December 15, 2024</text>
<text x="184.2" y="539.6" font-size="10.9" fill="#3b3b3b" text-anchor="middle" letter-spacing="-0.35">$2,275</text>
<text x="259.4" y="539.6" font-size="10.9" fill="#3b3b3b" text-anchor="middle" letter-spacing="-0.35">$100</text>
<text x="334.3" y="539.6" font-size="10.9" fill="#3b3b3b" text-anchor="middle" letter-spacing="-0.35">$4,760</text>
<text x="409.2" y="539.6" font-size="10.9" fill="#3b3b3b" text-anchor="middle" letter-spacing="-0.35">$130</text>
<text x="484.4" y="539.6" font-size="10.9" fill="#3b3b3b" text-anchor="middle" letter-spacing="-0.35">$7,185</text>
<text x="559.8" y="539.6" font-size="10.9" fill="#3b3b3b" text-anchor="middle" letter-spacing="-0.35">$180</text>
<text x="143.2" y="555.2" font-size="10.9" fill="#3b3b3b" text-anchor="end" letter-spacing="-0.12">January 15, 2025</text>
<text x="184.2" y="555.2" font-size="10.9" fill="#3b3b3b" text-anchor="middle" letter-spacing="-0.35">$2,200</text>
<text x="259.4" y="555.2" font-size="10.9" fill="#3b3b3b" text-anchor="middle" letter-spacing="-0.35">$100</text>
<text x="334.3" y="555.2" font-size="10.9" fill="#3b3b3b" text-anchor="middle" letter-spacing="-0.35">$4,680</text>
<text x="409.2" y="555.2" font-size="10.9" fill="#3b3b3b" text-anchor="middle" letter-spacing="-0.35">$130</text>
<text x="484.4" y="555.2" font-size="10.9" fill="#3b3b3b" text-anchor="middle" letter-spacing="-0.35">$7,080</text>
<text x="559.8" y="555.2" font-size="10.9" fill="#3b3b3b" text-anchor="middle" letter-spacing="-0.35">$180</text>
<text x="143.2" y="570.8" font-size="10.9" fill="#3b3b3b" text-anchor="end" letter-spacing="-0.12">February 15, 2025</text>
<text x="184.2" y="570.8" font-size="10.9" fill="#3b3b3b" text-anchor="middle" letter-spacing="-0.35">$2,125</text>
<text x="259.4" y="570.8" font-size="10.9" fill="#3b3b3b" text-anchor="middle" letter-spacing="-0.35">$100</text>
<text x="334.3" y="570.8" font-size="10.9" fill="#3b3b3b" text-anchor="middle" letter-spacing="-0.35">$4,600</text>
<text x="409.2" y="570.8" font-size="10.9" fill="#3b3b3b" text-anchor="middle" letter-spacing="-0.35">$130</text>
<text x="484.4" y="570.8" font-size="10.9" fill="#3b3b3b" text-anchor="middle" letter-spacing="-0.35">$6,975</text>
<text x="559.8" y="570.8" font-size="10.9" fill="#3b3b3b" text-anchor="middle" letter-spacing="-0.35">$180</text>
<text x="143.2" y="586.4" font-size="10.9" fill="#3b3b3b" text-anchor="end" letter-spacing="-0.12">March 15, 2025</text>
<text x="184.2" y="586.4" font-size="10.9" fill="#3b3b3b" text-anchor="middle" letter-spacing="-0.35">$2,050</text>
<text x="259.4" y="586.4" font-size="10.9" fill="#3b3b3b" text-anchor="middle" letter-spacing="-0.35">$100</text>
<text x="334.3" y="586.4" font-size="10.9" fill="#3b3b3b" text-anchor="middle" letter-spacing="-0.35">$4,520</text>
<text x="409.2" y="586.4" font-size="10.9" fill="#3b3b3b" text-anchor="middle" letter-spacing="-0.35">$130</text>
<text x="484.4" y="586.4" font-size="10.9" fill="#3b3b3b" text-anchor="middle" letter-spacing="-0.35">$6,870</text>
<text x="559.8" y="586.4" font-size="10.9" fill="#3b3b3b" text-anchor="middle" letter-spacing="-0.35">$180</text>
<text x="143.2" y="602.0" font-size="10.9" fill="#3b3b3b" text-anchor="end" letter-spacing="-0.12">April 15, 2025</text>
<text x="184.2" y="602.0" font-size="10.9" fill="#3b3b3b" text-anchor="middle" letter-spacing="-0.35">$1,975</text>
<text x="259.4" y="602.0" font-size="10.9" fill="#3b3b3b" text-anchor="middle" letter-spacing="-0.35">$100</text>
<text x="334.3" y="602.0" font-size="10.9" fill="#3b3b3b" text-anchor="middle" letter-spacing="-0.35">$4,440</text>
<text x="409.2" y="602.0" font-size="10.9" fill="#3b3b3b" text-anchor="middle" letter-spacing="-0.35">$130</text>
<text x="484.4" y="602.0" font-size="10.9" fill="#3b3b3b" text-anchor="middle" letter-spacing="-0.35">$6,765</text>
<text x="559.8" y="602.0" font-size="10.9" fill="#3b3b3b" text-anchor="middle" letter-spacing="-0.35">$180</text>
</g>
<line x1="31" y1="121.1" x2="777" y2="121.1" stroke="#58616b" stroke-width="1.3" />
<line x1="31.3" y1="120.8" x2="31.3" y2="151.4" stroke="#46598a" stroke-width="1.2" />
<line x1="31" y1="150.8" x2="777.6" y2="150.8" stroke="#4f7fd6" stroke-width="1.6" />
<line x1="776.9" y1="120.8" x2="776.9" y2="151.4" stroke="#4f7fd6" stroke-width="1.6" />
<circle cx="777" cy="151.6" r="3.3" fill="#2f6fde" stroke="#ffffff" stroke-width="0.6"/>
<rect x="0" y="599" width="1024" height="12" fill="#f9fbfd" />
<rect x="0" y="599" width="30.5" height="9.3" fill="#f7f7f7" />
<rect x="30.5" y="599" width="984.5" height="9.3" fill="#ffffff" />
<line x1="0" y1="599.4" x2="1015" y2="599.4" stroke="#e6e6e6" stroke-width="0.8" />
<line x1="30.3" y1="599" x2="30.3" y2="608.3" stroke="#dcdcdc" stroke-width="1" />
<line x1="0" y1="608.7" x2="1024" y2="608.7" stroke="#dedede" stroke-width="1" />
<rect x="96" y="609.3" width="68" height="1.7" fill="#e3eaf6" />
<rect x="1015" y="102.5" width="9" height="506.5" fill="#ffffff" />
<line x1="1015.3" y1="102.5" x2="1015.3" y2="609" stroke="#e6e6e6" stroke-width="1" />
<rect x="1016.3" y="120.6" width="6.8" height="19.3" rx="3.4" fill="#dfdfdf"/>
<line x1="1015.3" y1="575" x2="1024" y2="575" stroke="#e8e8e8" stroke-width="1" />
<line x1="1015.3" y1="587" x2="1024" y2="587" stroke="#e8e8e8" stroke-width="1" />
<path d="M1017.3 582.6 L1019.7 580.2 L1022.1 582.6 Z" fill="#777"/>
<path d="M1017.3 592.4 L1019.7 594.8 L1022.1 592.4 Z" fill="#777"/>
<rect x="992" y="599.8" width="22.5" height="8.5" fill="#f6f6f6" />
<path d="M998.9 601.9 V606.9 L996.4 604.4 Z" fill="#888"/>
<path d="M1008.3 601.9 V606.9 L1010.8 604.4 Z" fill="#888"/>
<line x1="1023.3" y1="38" x2="1023.3" y2="102" stroke="#d6d6d6" stroke-width="0.8" />
</svg>
</body></html>
